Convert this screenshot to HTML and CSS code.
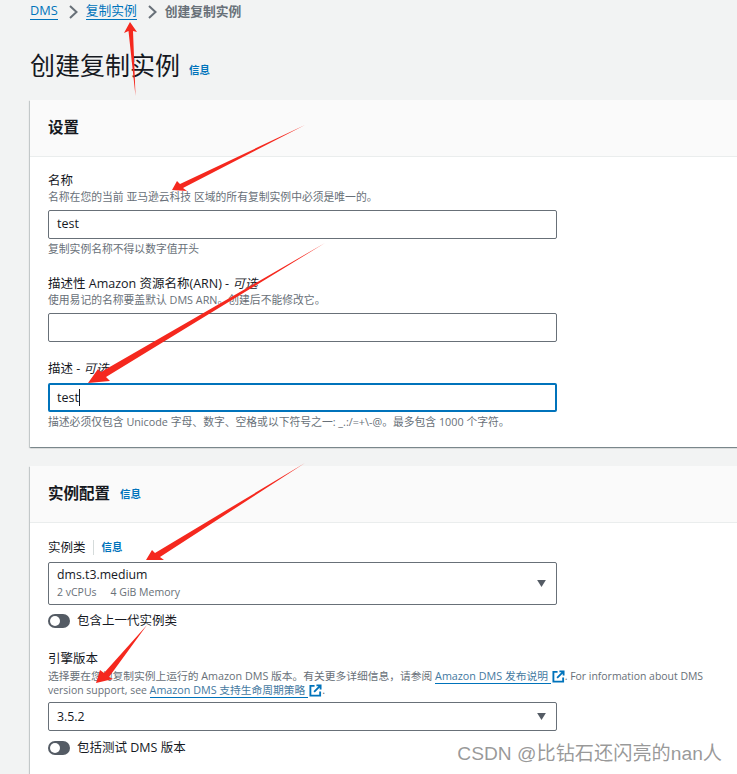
FILE: index.html
```html
<!DOCTYPE html>
<html lang="zh-CN">
<head>
<meta charset="utf-8">
<title>创建复制实例</title>
<link rel="stylesheet" href="styles.css">
</head>
<body>
<main class="page">
  <nav class="crumbs">
    <a class="crumb-link" href="#">DMS</a>
    <svg class="crumb-sep" viewBox="0 0 10 14"><path d="M2 1 8.5 7 2 13"/></svg>
    <a class="crumb-link" href="#">复制实例</a>
    <svg class="crumb-sep" viewBox="0 0 10 14"><path d="M2 1 8.5 7 2 13"/></svg>
    <span class="crumb-current">创建复制实例</span>
  </nav>
  <div class="title-row">
    <h1 class="title">创建复制实例</h1>
    <a class="info info-title" href="#">信息</a>
  </div>

  <section class="card">
    <header class="card-head"><h2 class="card-title">设置</h2></header>
    <div class="card-body card-body-one">
      <div class="field">
        <div class="label">名称</div>
        <div class="desc">名称在您的当前 亚马逊云科技 区域的所有复制实例中必须是唯一的。</div>
        <div class="input">test</div>
        <div class="hint">复制实例名称不得以数字值开头</div>
      </div>
      <div class="field field-arn">
        <div class="label">描述性 Amazon 资源名称(ARN) - <i>可选</i></div>
        <div class="desc">使用易记的名称要盖默认 DMS ARN。创建后不能修改它。</div>
        <div class="input"></div>
      </div>
      <div class="field field-desc">
        <div class="label">描述 - <i>可选</i></div>
        <div class="input input-focus"><span class="caret-text">test</span></div>
        <div class="hint">描述必须仅包含 Unicode 字母、数字、空格或以下符号之一: _.:/=+\-@。最多包含 1000 个字符。</div>
      </div>
    </div>
  </section>

  <section class="card card-second">
    <header class="card-head">
      <h2 class="card-title">实例配置</h2>
      <a class="info info-head" href="#">信息</a>
    </header>
    <div class="card-body card-body-two">
      <div class="field">
        <div class="label label-row"><span>实例类</span><span class="label-div"></span><a class="info" href="#">信息</a></div>
        <div class="select select-tall">
          <div>
            <div class="select-value">dms.t3.medium</div>
            <div class="select-sub"><span>2 vCPUs</span><span>4 GiB Memory</span></div>
          </div>
          <svg class="caret" viewBox="0 0 10 8"><path d="M0 0h10L5 8z"/></svg>
        </div>
        <div class="toggle-row toggle-row-first"><span class="toggle"><span class="knob"></span></span><span>包含上一代实例类</span></div>
      </div>
      <div class="field field-engine">
        <div class="label">引擎版本</div>
        <div class="desc desc-lines">选择要在您的复制实例上运行的 Amazon DMS 版本。有关更多详细信息，请参阅 <a class="ext" href="#">Amazon DMS 发布说明 </a><svg class="ext-icon" viewBox="0 0 14 14"><path d="M6 2H1.5v10.5H12V8"/><path d="M5.5 8.5 12.5 1.5M8 1.5h4.5V6"/></svg><span class="desc-latin">. For information about DMS version support, see </span><a class="ext" href="#">Amazon DMS 支持生命周期策略 </a><svg class="ext-icon" viewBox="0 0 14 14"><path d="M6 2H1.5v10.5H12V8"/><path d="M5.5 8.5 12.5 1.5M8 1.5h4.5V6"/></svg>.</div>
        <div class="select">
          <div class="select-value">3.5.2</div>
          <svg class="caret" viewBox="0 0 10 8"><path d="M0 0h10L5 8z"/></svg>
        </div>
        <div class="toggle-row"><span class="toggle"><span class="knob"></span></span><span>包括测试 DMS 版本</span></div>
      </div>
    </div>
  </section>
</main>

<svg class="marks" viewBox="0 0 737 774">
  <path d="M130 22 137 32 133 31 135.5 96 128.5 31 124 33z"/>
  <path d="M172 190 177 181 180 184 305 125 183 188 187 191z"/>
  <path d="M88 383 98 369 101 372 325 243 106 377 110 381z"/>
  <path d="M146 560 152 550 155 553 305 463 160 557 164 560z"/>
  <path d="M96 683 100 670 104 673 147 625 109 677 113 679z"/>
</svg>
<div class="watermark">CSDN @比钻石还闪亮的nan人</div>
</body>
</html>
```

FILE: styles.css
```css
html, body {
  margin: 0;
  padding: 0;
  width: 737px;
  height: 774px;
  overflow: hidden;
}
body {
  position: relative;
  background: #f2f3f3;
  color: #16191f;
  font-family: "Open Sans", "Noto Sans CJK SC", sans-serif;
  font-size: 12.5px;
}
a { text-decoration: none; }
.page { padding-left: 30px; }

.crumbs {
  display: flex;
  align-items: center;
  height: 21px;
  font-size: 12.75px;
  line-height: 20px;
}
.crumb-link {
  color: #0073bb;
  border-bottom: 1px solid #0073bb;
  line-height: 17px;
}
.crumb-sep {
  width: 10px;
  height: 14px;
  margin: 3px 8px 0 10px;
  fill: none;
  stroke: #687078;
  stroke-width: 2;
}
.crumb-current { color: #687078; font-weight: 700; }

.title-row {
  display: flex;
  align-items: flex-end;
  margin-top: 26px;
  height: 36px;
}
.title {
  margin: 0;
  font-size: 25px;
  font-weight: 400;
  line-height: 36px;
}
.info {
  color: #0073bb;
  font-size: 10.5px;
  font-weight: 700;
}
.info-title { margin: 0 0 6px 9px; line-height: 14px; }

.card {
  width: 760px;
  margin-top: 17px;
  background: #fff;
  box-shadow: 0 1px 1px 0 rgba(0, 28, 36, .3), 1px 1px 1px 0 rgba(0, 28, 36, .15), -1px 1px 1px 0 rgba(0, 28, 36, .15);
}
.card-second { margin-top: 19px; }
.card-head {
  display: flex;
  align-items: center;
  height: 57px;
  padding: 0 0 2px 18px;
  background: #fafafa;
  border-bottom: 1px solid #eaeded;
  box-sizing: border-box;
}
.card-title {
  margin: 0;
  font-size: 15.5px;
  font-weight: 700;
  line-height: 22px;
}
.info-head { margin-left: 10px; }

.card-body { padding: 0 18px; }
.card-body-one { padding-top: 15px; padding-bottom: 18px; }
.card-body-two { padding-top: 16px; height: 260px; box-sizing: border-box; }

.label { font-size: 12.5px; line-height: 17px; color: #16191f; }
.desc, .hint { font-size: 10.8px; line-height: 14px; color: #687078; }
.desc { margin-top: 1px; margin-bottom: 6px; }
.hint { margin-top: 3px; }
.field-arn { margin-top: 19px; }
.field-desc { margin-top: 18px; }
.field-desc .label { margin-bottom: 6px; }

.input {
  width: 509px;
  height: 29px;
  box-sizing: border-box;
  padding: 0 8px;
  background: #fff;
  border: 1px solid #687078;
  border-radius: 2px;
  font-size: 12.5px;
  line-height: 26px;
}
.input-focus {
  border: 2px solid #0073bb;
  padding: 0 7px;
  line-height: 25px;
}
.caret-text { border-right: 1px solid #16191f; }

.label-row { display: flex; align-items: center; height: 17px; }
.label-div {
  width: 1px;
  height: 15px;
  margin: 0 8px 0 7px;
  background: #d5dbdb;
}
.label-row + .select { margin-top: 6px; }

.select {
  display: flex;
  align-items: center;
  justify-content: space-between;
  width: 509px;
  height: 29px;
  box-sizing: border-box;
  padding: 0 10px 0 8px;
  background: #fff;
  border: 1px solid #687078;
  border-radius: 2px;
}
.select-tall { height: 43px; }
.select-value { font-size: 12.3px; line-height: 16px; }
.select-sub {
  display: flex;
  gap: 14px;
  font-size: 10.5px;
  line-height: 16px;
  color: #687078;
  margin-top: 1px;
}
.caret { width: 9px; height: 7px; fill: #545b64; }

.toggle-row {
  display: flex;
  align-items: center;
  gap: 7px;
  height: 16px;
  margin-top: 9px;
  font-size: 12.5px;
  line-height: 16px;
}
.toggle-row-first { margin-top: 8px; }
.toggle {
  display: block;
  position: relative;
  width: 22px;
  height: 14px;
  border-radius: 7px;
  background: #545b64;
}
.knob {
  position: absolute;
  left: 2px;
  top: 2px;
  width: 10px;
  height: 10px;
  border-radius: 50%;
  background: #fff;
}

.field-engine { margin-top: 21px; }
.desc-lines { width: 665px; margin-top: 2px; margin-bottom: 5px; font-size: 10.75px; }
.desc-latin { font-size: 10.45px; }
.ext { color: #44799f; border-bottom: 1px solid #0073bb; }
.ext-icon {
  width: 13px;
  height: 13px;
  margin-left: 1px;
  vertical-align: -3px;
  fill: none;
  stroke: #0073bb;
  stroke-width: 2;
}

.marks {
  position: absolute;
  left: 0;
  top: 0;
  width: 737px;
  height: 774px;
  fill: #f5281e;
  pointer-events: none;
}
.watermark {
  position: absolute;
  right: 15px;
  top: 743px;
  font-family: "Liberation Sans", "Noto Sans CJK SC", sans-serif;
  font-size: 19.2px;
  line-height: 22px;
  color: rgba(120, 120, 120, .75);
}
```
